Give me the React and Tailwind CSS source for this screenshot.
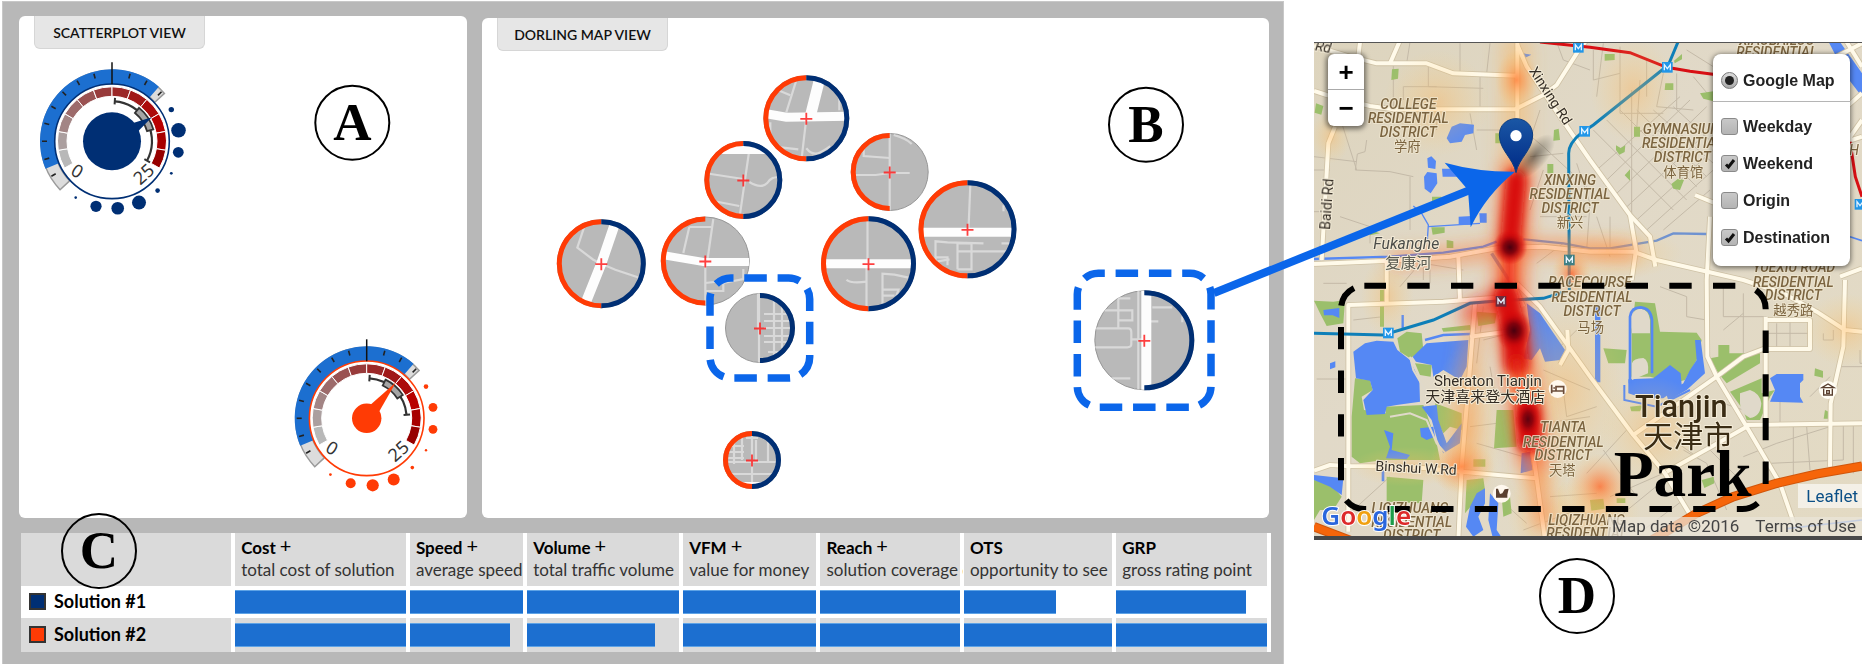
import React from "react";

const polar = (r, deg) => {
  const a = (deg * Math.PI) / 180;
  return [r * Math.sin(a), -r * Math.cos(a)];
};

const sector = (r0, r1, a0, a1) => {
  const large = a1 - a0 > 180 ? 1 : 0;
  const [x0, y0] = polar(r1, a0);
  const [x1, y1] = polar(r1, a1);
  const [x2, y2] = polar(r0, a1);
  const [x3, y3] = polar(r0, a0);
  return `M${x0} ${y0}A${r1} ${r1} 0 ${large} 1 ${x1} ${y1}L${x2} ${y2}A${r0} ${r0} 0 ${large} 0 ${x3} ${y3}Z`;
};

const arc = (r, a0, a1) => {
  const [x0, y0] = polar(r, a0);
  const [x1, y1] = polar(r, a1);
  return `M${x0} ${y0}A${r} ${r} 0 ${a1 - a0 > 180 ? 1 : 0} 1 ${x1} ${y1}`;
};

const radial = (r0, r1, a) => {
  const [x0, y0] = polar(r0, a);
  const [x1, y1] = polar(r1, a);
  return `M${x0} ${y0}L${x1} ${y1}`;
};

const SCALE = ["#b8b8b8", "#ab9f9f", "#a38585", "#9d6b6b", "#9a5252", "#983b3b", "#9b2828", "#a01818", "#ac0b0b", "#b80000", "#a80000", "#960000"];
const TICKS = [-120, -105, -90, -75, -60, -45, -30, -15, 15, 30, 45];

function Dial({ x, y, color, hub, needle, needleBase, whisker, box, dots }) {
  const [tx, ty] = polar(46.5, needle);
  const [lx, ly] = polar(hub - 1, needle - needleBase);
  const [rx, ry] = polar(hub - 1, needle + needleBase);
  return (
    <g transform={`translate(${x} ${y})`}>
      <path d={sector(58, 71, -133, 47.6)} fill="#dcdcdc" stroke="#9a9a9a" strokeWidth="1.5" />
      <path d={sector(57, 72, -112.5, 40.6)} fill="#1c6fd0" />
      {TICKS.map((t) => (
        <path key={t} d={radial(65, 70, t)} stroke="#222" strokeWidth="1.6" />
      ))}
      <circle r="57.3" fill="#fff" stroke={color} strokeWidth="1.6" />
      <path d="M0 -79V-57" stroke="#111" strokeWidth="1.5" />
      {SCALE.map((c, i) => (
        <path key={c} d={sector(45, 54.5, -119.4 + i * 19.9, -119.4 + (i + 1) * 19.9)} fill={c} stroke="#fff" strokeWidth="1" />
      ))}
      <path d={arc(40, whisker[0], whisker[1])} fill="none" stroke="#333" strokeWidth="2.2" />
      <path d={radial(37, 43.5, whisker[0])} stroke="#333" strokeWidth="2" />
      <path d={radial(37, 43.5, whisker[1])} stroke="#333" strokeWidth="2" />
      <path d={sector(36.5, 43, box[0], box[1])} fill="#a5a5a5" stroke="#333" strokeWidth="1.8" />
      <path d={`M${tx} ${ty}L${lx} ${ly}L${rx} ${ry}Z`} fill={color} />
      <circle r={hub} fill={color} />
      <text transform="translate(-35 30) rotate(32)" textAnchor="middle" y="6" fontSize="18" fill="#333" fontFamily="'Noto Sans', sans-serif">0</text>
      <text transform="translate(32 33) rotate(-42)" textAnchor="middle" y="6" fontSize="18" fill="#333" fontFamily="'Noto Sans', sans-serif">25</text>
      {dots.map(([dx, dy, r]) => (
        <circle key={`${dx},${dy}`} cx={dx} cy={dy} r={r} fill={color} />
      ))}
    </g>
  );
}

function Badge({ x, y, children }) {
  return (
    <g>
      <circle cx={x} cy={y} r="37" fill="none" stroke="#000" strokeWidth="2" />
      <text x={x} y={y + 17} textAnchor="middle" fontSize="53" fontWeight="700" fontFamily="'Liberation Serif', serif">{children}</text>
    </g>
  );
}

/* Street snippets are drawn round (0,0), the site's own position. */
const SITES = [
  {
    x: 806.3, y: 117.3, r: 43, left: true, right: true,
    wide: [["M-43 -5L-20 -1L43 -2", 9], ["M4 -2L14 -42", 11]],
    thin: ["M0 0L-5 43", "M-10 -38L-20 -6", "M-28 -28L-16 -23", "M-43 27L-8 31", "M0 30C8 40 14 34 24 28", "M33 -20V-8", "M-36 4V14"],
  },
  {
    x: 743.3, y: 179, r: 39, left: true, right: true,
    wide: [["M-26 -31H26", 10]],
    thin: ["M6 -30L-4 39", "M-39 -7L0 -1", "M6 2C14 7 20 7 24 3C27 -2 30 -3 39 -3", "M-30 21L-4 26"],
  },
  {
    x: 889.7, y: 171, r: 39, left: true, right: false,
    wide: [],
    thin: ["M0 -39V39", "M-39 3H-14L0 1H20", "M-26 -30V-16L0 -14", "M4 -37Q16 -34 22 -28"],
  },
  {
    x: 967.5, y: 228.3, r: 49, left: true, right: true,
    wide: [["M-49 3H49", 9]],
    thin: ["M3 -49L1 0", "M-32 40V12L-20 13L16 14", "M-10 40V14H4V40H-10", "M-10 22H40", "M34 14H46", "M-30 32L-18 30", "M36 -24V-18", "M-32 28H-20V36"],
  },
  {
    x: 868.5, y: 262.7, r: 47.5, left: true, right: true,
    wide: [["M-47 0H47", 9]],
    thin: ["M-1 -47V0", "M-2 0V47", "M-22 16Q-18 20 -2 18", "M14 44V10L26 11L40 14", "M14 26H30L26 38", "M14 32H26"],
  },
  {
    x: 601.3, y: 262.7, r: 44.5, left: true, right: true,
    wide: [["M13 -38L0 0L-16 40", 10]],
    thin: ["M-16 -40L-24 -16L-8 -4L0 0L14 6L38 14"],
  },
  {
    x: 705.3, y: 260, r: 44.5, left: true, right: false,
    wide: [["M-43 -6L-2 1H44", 8]],
    thin: ["M0 0V44", "M8 -42L2 0", "M-16 -34L-22 -8", "M-16 -34H6", "M0 22L18 20V30H0", "M38 8V18L18 22"],
  },
  {
    x: 760, y: 327, r: 35, left: false, right: true,
    wide: [],
    thin: ["M-1 -35V35", "M-2 -35V0", "M14 -30V30", "M22 -25V20", "M4 -14H28", "M4 -7H30", "M4 8H32", "M4 14H30", "M4 0H30", "M8 24H22"],
  },
  {
    x: 752, y: 459, r: 29, left: true, right: true,
    wide: [["M-16 24H14", 4]],
    thin: ["M0 -29V29", "M-29 2H26", "M-26 14H24", "M-10 -24V0", "M-18 -18V4", "M-24 -8H-8", "M-24 -14H-8", "M-24 -2H-8", "M16 -20V2", "M-6 -22H6", "M4 -20V0"],
  },
  {
    x: 1144.3, y: 339.3, r: 50, left: false, right: true,
    wide: [["M2 -50V50", 10]],
    thin: ["M-6 -50V50", "M-50 -12H-16Q-13 -12 -13 -8V4Q-13 7 -17 7H-50", "M-13 -1H0", "M-26 -46V-12", "M-40 -30H-12V-20H-26", "M-26 -42H-14", "M-44 38H-14", "M8 -33H28", "M4 -19H14", "M38 -24V-18"],
  },
];

function Site({ site, id }) {
  const { x, y, r, left, right, wide, thin } = site;
  const ring = r - 2.5;
  return (
    <g transform={`translate(${x} ${y})`}>
      <clipPath id={id}><circle r={r - 0.5} /></clipPath>
      <circle r={r - 0.5} fill="#b9b9b9" stroke="#979797" strokeWidth="1" />
      <g clipPath={`url(#${id})`} fill="none">
        {thin.map((d, i) => <path key={i} d={d} stroke="#d9d9d9" strokeWidth="2.2" />)}
        {wide.map(([d, w], i) => <path key={i} d={d} stroke="#fdfdfd" strokeWidth={w} />)}
      </g>
      {left && <path d={`M0 ${ring}A${ring} ${ring} 0 0 1 0 ${-ring}`} fill="none" stroke="#ff3b05" strokeWidth="5" />}
      {right && <path d={`M0 ${-ring}A${ring} ${ring} 0 0 1 0 ${ring}`} fill="none" stroke="#002f74" strokeWidth="5" />}
      <path d="M-6 0.500H6M0 -5.500V6.500" stroke="#ff2020" strokeWidth="1.8" opacity="0.85" />
    </g>
  );
}

function Panel({ title, children }) {
  return (
    <section className="self-end overflow-hidden rounded-md bg-white">
      <h2 className="ml-[15px] flex h-[33px] w-[171px] items-center justify-center whitespace-nowrap rounded-b-md border-x border-b border-[#d6d6d6] bg-[#e6e6e6] font-[Lato,sans-serif] text-[14px] font-semibold text-[#111]">{title}</h2>
      {children}
    </section>
  );
}

const COLUMNS = [
  ["Cost", "total cost of solution", true, 100, 100],
  ["Speed", "average speed p", true, 100, 88],
  ["Volume", "total traffic volume", true, 100, 84],
  ["VFM", "value for money", true, 100, 100],
  ["Reach", "solution coverage c", true, 100, 100],
  ["OTS", "opportunity to see", false, 62, 100],
  ["GRP", "gross rating point", false, 86, 100],
];

function SolutionTable() {
  return (
    <div className="mt-[15px] -mr-0.5 pl-0.5">
      <table className="w-full table-fixed border-collapse font-[Lato,sans-serif] text-[#1a1a1a]">
        <colgroup>
          <col className="w-[17%]" />
          <col className="w-[14%]" />
          <col className="w-[9.4%]" />
          <col className="w-[12.5%]" />
          <col className="w-[11%]" />
          <col className="w-[11.5%]" />
          <col className="w-[12.2%]" />
          <col className="w-[12.4%]" />
        </colgroup>
        <thead>
          <tr className="h-[53px] bg-[#dadada]">
            <td />
            {COLUMNS.map(([name, note, plus]) => (
              <th key={name} scope="col" className="whitespace-nowrap border-l-4 border-white py-0 pr-0 pl-1.5 text-left align-top font-normal last:border-r-4">
                <div className="mt-1 flex h-[22px] gap-1 text-[17px] leading-[22px] font-bold text-black">
                  {name}
                  {plus && <span className="text-[20px] leading-4 font-normal">+</span>}
                </div>
                <div className="-mr-[3px] overflow-x-clip text-[17px] leading-[22px] text-[#333]">{note}</div>
              </th>
            ))}
          </tr>
        </thead>
        <tbody>
          {[0, 1].map((row) => (
            <tr key={row} className={row ? "h-[34px] bg-[#dadada]" : "h-8 bg-white"}>
              <th scope="row" className="px-0 pt-0 pb-0.5 text-left">
                <span className="flex items-center gap-2 pl-2 text-[18px] leading-6 font-bold text-black">
                  <span className={row ? "size-[17px] border-2 border-[#333] bg-[#ff3b05]" : "size-[17px] border-2 border-[#333] bg-[#002f74]"} />
                  Solution #{row + 1}
                </span>
              </th>
              {COLUMNS.map((c) => (
                <td key={c[0]} className="border-l-4 border-white p-0 last:border-r-4">
                  <div className="h-6 border-y border-[#5ea3e6] bg-[#1c6fd0]" style={{ width: `${c[3 + row]}%` }} />
                </td>
              ))}
            </tr>
          ))}
        </tbody>
      </table>
    </div>
  );
}

const STREETS = [
  "M12 380L140 395M170 330L165 365L142 372L136 420L240 425L310 440M250 100V230M280 170V210M280 170H380M355 110V170L520 175M450 40V130M480 250L500 360M500 300H600M12 420H60",
  "M12 545H40M90 560L180 590L180 640M300 440V600M380 250V300M510 140V230M540 40L530 130M300 36L290 100M70 200L140 420",
  "M660 540L700 420M640 300L700 350L830 470M660 380L760 370M690 560L830 560M690 240L660 330M800 400L840 520L830 660M860 560L900 680M900 560V660M680 700L760 640",
  "M740 36L760 90L840 120M850 60V150M850 150L930 130M880 40L860 200M930 50V250M930 250H1060M965 180V560M990 150L980 300M1010 90V200M1060 130L1040 230L1150 240M1100 130V240M1130 60L1210 110M1150 140L1200 200",
  "M850 300L1090 540M890 270L1130 510M930 240L1160 470M980 240L1190 440M1030 240L1210 400M1090 230L1210 340M860 420L1110 200M880 460L1140 210M910 500L1190 230M940 540L1210 290M980 570L1210 360M1010 600L1210 420M1060 600L1200 480",
  "M40 760H110M20 1047H110M130 1440L240 1340M230 700V760M270 770L330 700M340 750V700L460 720M360 690V760M130 870L220 860M520 830L500 1000M520 930L600 910M540 1010L560 1120M480 1190L560 1180M470 1080L600 1090M500 1240L640 1280M700 1020L840 1080M740 960L800 900M760 1080L770 1160L860 1130",
  "M640 1500L800 1440M560 1400L650 1480M720 1400L860 1390M830 1330L950 1200M880 1260L980 1400M900 1400L1060 1330M940 1450L1050 1360M1000 1500L1120 1410M700 1180L840 1160",
  "M1050 770L1130 800V860L1190 870M1240 760V860H1370M1300 790V970M1400 880V950M1440 870V950M1370 910H1500M1240 900L1300 850M1120 1260L1190 1300L1250 1440M1200 1260L1280 1340M1300 1280L1400 1240L1560 1190M1450 1190V1340M1490 1190L1500 1320M1380 1300L1600 1290M1600 1180V1290M1630 1180V1330M1500 1100L1560 1040M1540 910V930H1570V900M1580 1010H1656M1650 960V1000H1656M1410 1040V1180M1240 1120L1300 1140M1090 1230L1160 1280",
];

const ROADS = [
  "M12 48L120 80L200 100L350 100L430 130L620 137",
  "M150 36L145 80M268 36L240 100",
  "M12 183L50 195L180 228L250 238H615L700 195L740 165L800 70L830 30",
  "M622 36V280L612 430L608 640L605 750L640 830",
  "M622 45L650 110L740 245L840 390L960 555L1020 620L1036 710",
  "M960 555L978 660L965 750",
  "M35 690L55 340L75 290",
  "M12 702L240 692L420 680L560 655L700 650L840 665L970 665L1040 690L1300 750L1420 790L1520 845L1605 900L1656 905",
  "M115 1505V825L400 815L600 800",
  "M230 690V820M445 680L450 815M250 238",
  "M495 820L480 1010L455 1310L445 1530M480 920L590 905",
  "M12 1322L60 1305L110 1308L300 1310L455 1325L680 1345L705 1530M680 1345L665 1240L625 1000",
  "M620 760L690 830L840 1040L970 1215L1065 1330L1150 1470",
  "M750 1005L775 960L772 900",
  "M1200 560L1190 750L1192 980L1220 1040L1310 1190L1410 1360L1455 1490",
  "M970 1215L1220 1040L1300 980L1360 957H1500V870H1370",
  "M1367 860V1180M1310 1185L1656 1180M1070 1325L1240 1230L1310 1190",
  "M1560 1310L1562 1120L1600 950L1605 750M1590 740L1656 715",
  "M1155 495L1240 530M1656 190L1610 230M1656 320L1610 335L1656 270M1560 90L1656 40M1610 36L1656 110",
];

const GREENS = [
  "M246 118l20 -2l-2 30l-20 4zM18 220l22 8l-6 26l-20 -6zM556 310h20v30h-20zM732 300l14 -4l4 34l-20 2zM712 402h18v28h-18zM366 500h28v14h-28zM364 592h40v16l-36 6zM410 630l20 4v20h-20zM180 600l30 10l-30 6z",
  "M884 72l30 0l0 18l-30 2zM1066 160h24v20h-26zM1092 92l24 -20v16l-22 12zM1170 190l40 -6v30l-30 -8zM972 290h18v30h-18zM918 346l14 8l14 -8l-2 20l-16 8l-10 -14zM944 436l16 -18v34zM1084 462l20 -16l18 4l-12 30l-20 -4z",
  "M12 812L70 815L105 810L100 880L50 888L30 850ZM262 925L290 905L335 910L340 960L300 985L270 965ZM500 845L560 850L555 880L505 888ZM395 895L480 885L485 900L400 905ZM210 780H222V890H210ZM235 710l-10 40h10z",
  "M135 1045L180 1050L188 1080L155 1100L162 1140L228 1150L225 1130L340 1125L350 1150L380 1240L390 1290L280 1290L220 1290L150 1300L125 1280V1160Z",
  "M315 1000L365 1005L362 1040L330 1035ZM375 1120L430 1140L455 1150V1200L420 1190L400 1210L385 1180ZM560 1140H610L620 1250L552 1255ZM490 1288h36v22h-36zM230 1340L340 1350L335 1420L230 1415ZM12 1350L60 1360L95 1400L70 1440L30 1440L12 1470ZM470 1350L520 1345L525 1380L490 1420L465 1450ZM575 1400L600 1400L605 1450L580 1460Z",
  "M975 815L1035 820L1050 905L1160 908L1175 930L1160 990L1125 1050L1090 1060L1020 1040L965 1040V900ZM880 955L950 960L945 1000L895 1000ZM1200 985L1225 980V945L1258 945V970L1350 970L1350 1000L1250 1060L1225 1030ZM1260 1085L1355 1045V1090L1395 1080L1380 1100L1350 1170L1310 1170L1300 1140ZM1515 1015l24 8v20l-26 -6zM1175 1350l36 -10l2 20l-30 14zM1545 1140l12 6v20l-16 0zM840 1410l40 -4l4 30l-40 6zM920 1405h26v14h-26zM960 1130l40 -4l-10 18h-26z",
];

const WATERS = [
  "M410 325L425 290L450 280L492 284L490 310L465 315L455 335L420 340ZM352 385l12 -6l14 14l-2 24l-22 -4zM342 440l10 -14l28 4l2 30l-20 30l-18 -14zM396 416h50v24h-48zM446 560l40 -2v26h-40zM508 550h22v28h-20z",
  "M130 965L165 940L200 932L250 935L262 960L300 990L328 1050L330 1115L260 1125L230 1130L225 1152L170 1155L160 1110L188 1080L180 1052L138 1045Z",
  "M308 980L350 940L475 930L470 1010L450 1050L400 1020L370 1040L365 1005L318 995Z",
  "M222 1200L250 1210L245 1260L300 1275L290 1288L228 1285L240 1250ZM335 1130L380 1125L385 1170L410 1240L455 1180L450 1240L400 1270L382 1230L365 1170Z",
  "M330 1195L370 1190L375 1220L350 1230L333 1220ZM12 1335L100 1345L95 1395L60 1370L12 1350ZM40 840l48 -6v30l-20 -8l-26 0zM60 1000l16 -6v18l-16 6z",
  "M650 820L690 850L765 960L750 990L705 995L690 955L665 990L640 985L660 900ZM635 1270L660 1265L668 1320L632 1330ZM500 1390L525 1375V1420L505 1460L520 1500L490 1520L468 1490L480 1430ZM540 1390L565 1420L560 1500L580 1530H550L535 1470Z",
  "M855 825h16v232h-16zM955 1048L1030 1045L1080 1005L1112 1030L1115 1065L1060 1105L1000 1105L955 1090ZM1155 930L1172 930L1185 1030L1130 1080L1075 1112L1070 1095L1120 1060L1140 1020L1160 990ZM1380 1045L1400 1032H1480V1050L1470 1060V1100L1480 1118L1380 1115L1395 1080Z",
  "M1556 36L1590 36L1656 130V200L1610 140ZM215 1310h8v44h-8zM640 70l24 4l-20 10z",
];

const LABELS = [
  [295, 236, "COLLEGE"], [295, 278, "RESIDENTIAL"], [295, 320, "DISTRICT"],
  [780, 465, "XINXING"], [780, 506, "RESIDENTIAL"], [780, 548, "DISTRICT"],
  [1117, 312, "GYMNASIUM"], [1117, 354, "RESIDENTIAL"], [1117, 395, "DISTRICT"],
  [840, 772, "RACECOURSE"], [846, 817, "RESIDENTIAL"], [846, 858, "DISTRICT"],
  [760, 1206, "TIANTA"], [760, 1250, "RESIDENTIAL"], [760, 1290, "DISTRICT"],
  [300, 1448, "LIQIZHUANG"], [305, 1490, "RESIDENTIAL"], [305, 1530, "DISTRICT"],
  [830, 1484, "LIQIZHUANG"], [830, 1524, "RESIDENTIAL"],
  [1400, 46, "XIAOBAILOU"], [1400, 82, "RESIDENTIAL"],
  [1452, 726, "YUEXIU ROAD"], [1450, 770, "RESIDENTIAL"], [1450, 810, "DISTRICT"],
];

const CJK_LABELS = [
  [292, 364, "学府"], [780, 592, "新兴"], [1120, 440, "体育馆"], [842, 905, "马场"],
  [757, 1336, "天塔"], [1450, 855, "越秀路"],
];

const METROS = [[805, 52, "#2196e8"], [1072, 112, "#2196e8"], [824, 304, "#2196e8"], [778, 690, "#3f7f84"], [235, 909, "#2196e8"], [573, 814, "#6e2a3a"], [1650, 523, "#2196e8"]];

/* cx, cy, rx, ry, gradient */
const GLOW = [
  [620, 150, 64, 90, "warm"], [62, 320, 60, 80, "faint"], [232, 800, 80, 120, "faint"], [785, 730, 60, 70, "warm"],
  [455, 1310, 100, 80, "warm"], [290, 1310, 170, 60, "faint"], [870, 1370, 100, 100, "warm"], [760, 1080, 190, 260, "faint"],
  [970, 180, 130, 160, "faint"], [1610, 900, 130, 110, "faint"], [1030, 1200, 160, 160, "faint"], [700, 1450, 110, 140, "faint"],
  [900, 670, 220, 80, "faint"], [470, 1200, 110, 260, "faint"], [850, 1450, 140, 120, "faint"], [380, 220, 160, 160, "faint"],
];

function CityMap() {
  return (
    <svg viewBox="12 36 1644 1494" className="block w-full" role="img" aria-label="Traffic heat map">
      <defs>
        <linearGradient id="land" x1="0" y1="0" x2="1" y2="1">
          <stop offset="0" stopColor="#ddd4bd" /><stop offset="0.4" stopColor="#e1d9c8" /><stop offset="1" stopColor="#e3dac3" />
        </linearGradient>
        <radialGradient id="faint"><stop offset="0" stopColor="#ffb050" stopOpacity="0.38" /><stop offset="1" stopColor="#ffd070" stopOpacity="0" /></radialGradient>
        <radialGradient id="warm"><stop offset="0" stopColor="#ff5a20" stopOpacity="0.75" /><stop offset="0.5" stopColor="#ff8a40" stopOpacity="0.35" /><stop offset="1" stopColor="#ffc060" stopOpacity="0" /></radialGradient>
        <radialGradient id="dark"><stop offset="0" stopColor="#48000f" /><stop offset="0.35" stopColor="#78000c" stopOpacity="0.9" /><stop offset="0.7" stopColor="#c0040a" stopOpacity="0.5" /><stop offset="1" stopColor="#e00808" stopOpacity="0" /></radialGradient>
        <linearGradient id="pin" x1="0" y1="0" x2="0" y2="1"><stop offset="0" stopColor="#1a57a5" /><stop offset="1" stopColor="#002a86" /></linearGradient>
        <radialGradient id="shade"><stop offset="0" stopColor="#000" stopOpacity="0.45" /><stop offset="1" stopColor="#000" stopOpacity="0" /></radialGradient>
        <filter id="haze" filterUnits="userSpaceOnUse" x="0" y="0" width="1700" height="1600"><feGaussianBlur stdDeviation="26" /></filter>
        <filter id="core" filterUnits="userSpaceOnUse" x="400" y="300" width="500" height="1200"><feGaussianBlur stdDeviation="14" /></filter>
      </defs>
      <rect x="12" y="36" width="1644" height="1494" fill="url(#land)" />
      <g fill="none" stroke="#c4baa8" strokeWidth="3">{STREETS.map((d) => <path key={d} d={d} />)}</g>
      <g fill="#9bbf6b">{GREENS.map((d) => <path key={d} d={d} />)}</g>
      <g fill="#5588f4">{WATERS.map((d) => <path key={d} d={d} />)}</g>
      <path d="M300 980L310 1020L345 1080L360 1110M240 1160L300 1150L350 1170L380 1240L405 1268" fill="none" stroke="#e0d9ca" strokeWidth="6" />
      <path d="M966 1040V860Q970 836 992 836Q1016 838 1020 870V910H966M966 1000Q970 985 1000 984Q1018 990 1014 1030L966 1050ZM1290 1090L1320 1080Q1350 1090 1354 1120Q1352 1160 1320 1164Q1290 1150 1290 1120Z" fill="#e0d9ca" />
      <g fill="none" stroke="#5588f4" strokeWidth="7">
        <path d="M12 687L240 680L400 668L520 650L560 635" /><path d="M640 628L760 640L840 655L900 655L1040 632L1090 610L1190 612" stroke="#6f92d0" />
        <path d="M310 528L335 550L355 585L352 630M355 590L510 580" strokeWidth="4" /><path d="M545 670L600 755" stroke="#7d8fb8" strokeWidth="10" />
        <path d="M345 930L400 915L480 912M278 855V900" /><path d="M960 1060V860Q964 832 992 832Q1022 834 1026 870V1030" strokeWidth="8" />
        <path d="M943 1065V1110L1040 1130L1140 1080" strokeWidth="6" /><path d="M1620 620L1656 632M1430 1496L1656 1470" strokeWidth="5" />
      </g>
      <g fill="none" stroke="#cfc2a6" strokeWidth="17" strokeLinejoin="round">{ROADS.map((d) => <path key={d} d={d} />)}</g>
      <g fill="none" stroke="#fffaea" strokeWidth="12" strokeLinejoin="round">{ROADS.map((d) => <path key={d} d={d} />)}</g>
      <path d="M1010 1540L1160 1450L1270 1400L1400 1360L1520 1332L1656 1308M12 1490L130 1535" fill="none" stroke="#d0560c" strokeWidth="28" />
      <path d="M1010 1540L1160 1450L1270 1400L1400 1360L1520 1332L1656 1308M12 1490L130 1535" fill="none" stroke="#f6650a" strokeWidth="22" />
      <g fill="none" strokeWidth="9">
        <path d="M690 36L840 52L960 68L1070 112L1140 124L1220 134M1620 335L1636 440L1656 500" stroke="#d80f14" />
        <path d="M1104 36L1075 105L850 285L815 308Q776 340 776 370L778 780" stroke="#0e7fb8" />
        <path d="M12 910L220 915L370 870L480 820L570 812L700 805L765 785" stroke="#0e7fb8" />
      </g>
      {GLOW.map(([cx, cy, rx, ry, g], i) => <ellipse key={i} cx={cx} cy={cy} rx={rx} ry={ry} fill={`url(#${g})`} />)}
      <g fill="none" strokeLinecap="round" strokeLinejoin="round">
        <g filter="url(#haze)">
          <path d="M618 60L616 440L605 700L600 800L625 1000L655 1180L680 1340" stroke="#ffb050" strokeWidth="90" opacity="0.4" />
          <path d="M500 860L480 1010L460 1310" stroke="#ff9040" strokeWidth="60" opacity="0.4" />
          <path d="M260 690L420 678L600 655L720 652L960 665" stroke="#ff7430" strokeWidth="46" opacity="0.55" />
          <path d="M618 430L604 650L596 790L614 910L628 1010L655 1180L672 1280" stroke="#ff5020" strokeWidth="96" opacity="0.6" />
          <path d="M490 850L600 800" stroke="#f03018" strokeWidth="70" opacity="0.7" />
          <path d="M680 1340L700 1480" stroke="#ff7430" strokeWidth="40" opacity="0.6" />
        </g>
        <g filter="url(#core)">
          <path d="M618 450L608 560L600 650" stroke="#d80808" strokeWidth="62" />
          <path d="M600 650L596 790" stroke="#e82010" strokeWidth="36" opacity="0.75" />
          <path d="M588 800L612 900L620 1000" stroke="#d80808" strokeWidth="74" />
          <path d="M620 1000L650 1150" stroke="#f04020" strokeWidth="34" opacity="0.6" />
          <path d="M654 1140L658 1230" stroke="#d80808" strokeWidth="76" />
        </g>
      </g>
      <circle cx="600" cy="652" r="52" fill="url(#dark)" />
      <ellipse cx="612" cy="902" rx="54" ry="62" fill="url(#dark)" />
      <ellipse cx="654" cy="1168" rx="40" ry="60" fill="url(#dark)" opacity="0.85" />
      {METROS.map(([x, y, c]) => (
        <g key={`${x}-${y}`}>
          <rect x={x - 16} y={y - 16} width="32" height="32" fill={c} />
          <path d={`M${x - 9} ${y + 9}V${y - 8}L${x} ${y + 4}L${x + 9} ${y - 8}V${y + 9}`} fill="none" stroke="#e4f3ff" strokeWidth="4" />
        </g>
      ))}
      <g fill="#7b6440" stroke="#efe6d0" strokeOpacity="0.8" strokeWidth="6" paintOrder="stroke" textAnchor="middle" strokeLinejoin="round">
        <g fontSize="41" fontStyle="italic" fontWeight="500" fontFamily="Roboto, sans-serif">
          {LABELS.map(([x, y, t]) => <text key={`${x}${y}`} x={x} y={y}>{t}</text>)}
        </g>
        <g fontSize="40" fontFamily="'Noto Sans CJK SC', sans-serif">
          {CJK_LABELS.map(([x, y, t]) => <text key={t} x={x} y={y}>{t}</text>)}
        </g>
      </g>
      <g fill="#332c24" stroke="#f4ecd8" strokeWidth="6" paintOrder="stroke" strokeLinejoin="round" fontFamily="Roboto, 'Noto Sans CJK SC', sans-serif">
        <text x="14" y="60" fontSize="42" fontStyle="italic" transform="rotate(10 14 60)">Rd</text>
        <text transform="translate(60 600) rotate(-86)" fontSize="42">Baidi Rd</text>
        <text transform="translate(656 122) rotate(57)" fontSize="42">Xinxing Rd</text>
        <text x="190" y="658" fontSize="47" fontStyle="italic" fill="#4b4b48">Fukanghe</text>
        <text x="226" y="714" fontSize="46" fill="#5a5a50">复康河</text>
        <text x="372" y="1068" fontSize="45">Sheraton Tianjin</text>
        <text x="346" y="1115" fontSize="45">天津喜来登大酒店</text>
        <text transform="translate(196 1322) rotate(3)" fontSize="42">Binshui W.Rd</text>
        <text x="975" y="1162" fontSize="92" fontWeight="500" fill="#3a2c14">Tianjin</text>
        <text x="1000" y="1250" fontSize="90" fill="#3a2c14">天津市</text>
        <text x="1618" y="374" fontSize="42" fontStyle="italic" fill="#7b6440">H</text>
      </g>
      <g>
        <circle cx="743" cy="1077" r="27" fill="#fff8ee" /><path d="M725 1064V1090M725 1083H761V1092M761 1083V1070H738V1083M730 1074h5" fill="none" stroke="#6b4c3a" strokeWidth="5" />
        <circle cx="575" cy="1391" r="27" fill="#fff8ee" /><path d="M558 1376V1403H592V1394L596 1376L584 1378L577 1390L570 1392L564 1376Z" fill="#5a4030" />
        <circle cx="1554" cy="1080" r="27" fill="#fffdf5" /><path d="M1536 1073L1554 1062L1572 1073ZM1541 1076V1095H1567V1076M1550 1082H1558V1090H1550Z" fill="none" stroke="#5a4030" strokeWidth="4" />
      </g>
      <ellipse cx="672" cy="380" rx="84" ry="38" transform="rotate(-48 672 380)" fill="url(#shade)" />
      <path d="M618 428C610 385 568 360 568 315C568 286 590 266 618 266C646 266 668 286 668 315C668 360 626 385 618 428Z" fill="url(#pin)" stroke="#0b3c80" strokeWidth="3" />
      <circle cx="618" cy="317" r="17" fill="#fff" />
      <rect x="93" y="767" width="1274" height="670" rx="70" fill="none" stroke="#000" strokeWidth="18" strokeDasharray="67 64" strokeDashoffset="2" />
      <text x="911" y="1398" fontSize="196" fontWeight="700" fontFamily="'Liberation Serif', serif">Park</text>
      <text x="34" y="1485" fontSize="78" fontWeight="600" fontFamily="'Noto Sans', sans-serif" stroke="#fff" strokeWidth="6" paintOrder="stroke">
        <tspan fill="#2a66dd">G</tspan><tspan fill="#dd2a2a">o</tspan><tspan fill="#f0a010">o</tspan><tspan fill="#2a66dd">g</tspan><tspan fill="#1c9c48">l</tspan><tspan fill="#dd2a2a">e</tspan>
      </text>
      <path d="M12 37H1656" stroke="#555" strokeWidth="4" />
      <path d="M12 1524H1656" stroke="#484848" strokeWidth="12" />
    </svg>
  );
}

function Option({ type, label, checked }) {
  const round = type === "radio";
  return (
    <label className="flex items-center gap-[5px] whitespace-nowrap">
      <span className="relative flex size-[17px] items-center justify-center">
        <input
          type={type}
          name={round ? "base" : label}
          defaultChecked={checked}
          className={`peer size-[17px] appearance-none border bg-linear-to-b ${round ? "rounded-full border-[#777] from-[#ddd] to-[#aaa]" : "rounded-[3px] border-[#8a8a8a] from-[#c8c8c8] to-[#b4b4b4]"}`}
        />
        {round ? (
          <span className="pointer-events-none absolute hidden size-[9px] rounded-full bg-[#222] peer-checked:block" />
        ) : (
          <svg viewBox="0 0 12 12" className="pointer-events-none absolute hidden size-3 peer-checked:block">
            <path d="M2 6.500L4.500 9L10 2" fill="none" stroke="#111" strokeWidth="3" />
          </svg>
        )}
      </span>
      {label}
    </label>
  );
}

export default function App() {
  return (
    <main className="relative grid grid-cols-[1282fr_548fr] items-start gap-x-[30px] bg-white pt-px pr-2 pl-0.5">
      <div className="border border-[#c8c8c8] bg-[#b8b8b8] pt-[14px] pr-[14px] pb-3 pl-4">
        <div className="grid grid-cols-[448fr_787fr] gap-x-[15px]">
          <Panel title="SCATTERPLOT VIEW">
            <svg viewBox="19 49 448 469" className="block w-full" role="img" aria-label="Scatterplot of two solutions">
              <Dial
                x={112} y={141.3} color="#002f74" hub={29} needle={59} needleBase={10} whisker={[4, 119]} box={[39, 74]}
                dots={[[59.3, -31.7, 2.7], [66.5, -11, 7.3], [66.3, 11, 5.4], [59.3, 32, 1.4], [45.6, 49.3, 2.3], [27, 61.3, 7], [5.7, 67, 6.3], [-16, 65, 5.6], [-36.3, 56.3, 1.3]]}
              />
              <Dial
                x={366.7} y={418.3} color="#ff3b05" hub={14.7} needle={39} needleBase={24} whisker={[4, 85]} box={[26, 57]}
                dots={[[59.3, -31.7, 2.3], [66.3, -11, 4.4], [66.3, 11, 4.4], [59.3, 32, 1.2], [45.6, 49.3, 1.8], [27, 61.3, 6], [6, 67, 6.1], [-16, 65, 5], [-36.3, 56.3, 1.4]]}
              />
              <Badge x={352.3} y={122.7}>A</Badge>
            </svg>
          </Panel>
          <Panel title="DORLING MAP VIEW">
            <svg viewBox="482 50 787 467" className="block w-full" role="img" aria-label="Dorling map of sites">
              {SITES.map((s, i) => <Site key={i} site={s} id={`site-${i}`} />)}
              <g fill="none" stroke="#0b66ea" strokeWidth="7.5" strokeDasharray="22.5 10.8">
                <rect x="710" y="277" width="99.7" height="100" rx="21" strokeDashoffset="20" />
                <rect x="1077.3" y="272.3" width="133.7" height="134" rx="21" strokeDashoffset="16" />
              </g>
              <Badge x={1146} y={123.7}>B</Badge>
            </svg>
          </Panel>
        </div>
        <SolutionTable />
      </div>

      <aside className="flex flex-col items-center pt-[41px]">
        <div className="relative w-full overflow-hidden">
          <CityMap />
          <div className="absolute top-3 left-[14px] flex flex-col rounded-md bg-white shadow-[0_1px_5px_2px_rgba(0,0,0,0.5)]">
            <button type="button" aria-label="Zoom in" className="flex size-9 items-center justify-center border-b border-[#aaa] font-['Liberation_Sans',sans-serif] text-[26px] leading-none font-bold text-black">+</button>
            <button type="button" aria-label="Zoom out" className="flex size-9 items-center justify-center font-['Liberation_Sans',sans-serif] text-[26px] leading-none font-bold text-black">−</button>
          </div>
          <form className="absolute top-3 right-3 w-[137px] rounded-lg bg-white font-['Liberation_Sans',sans-serif] text-[16px] leading-[37px] font-bold text-[#222] shadow-[0_1px_5px_1px_rgba(0,0,0,0.5)]">
            <div className="border-b border-[#b5b5b5] px-2 pt-2 pb-0.5">
              <Option type="radio" label="Google Map" checked />
            </div>
            <div className="px-2 pt-1.5 pb-[10px]">
              <Option type="checkbox" label="Weekday" />
              <Option type="checkbox" label="Weekend" checked />
              <Option type="checkbox" label="Origin" />
              <Option type="checkbox" label="Destination" checked />
            </div>
          </form>
          <a href="#leaflet" className="absolute right-0 bottom-8 bg-white/60 pr-1 pl-2 font-[Roboto,sans-serif] text-[17px] leading-6 text-[#0b4f86]">Leaflet</a>
          <div className="absolute right-0 bottom-1 flex gap-4 bg-[#e9e4d8]/75 pr-1.5 pl-1 font-[Roboto,sans-serif] text-[17px] leading-[19px] text-[#444]">
            <span>Map data ©2016</span>
            <a href="#terms">Terms of Use</a>
          </div>
        </div>
        <svg viewBox="0 0 76 76" className="mt-[18px] -ml-[22px] block w-[76px]" role="img" aria-label="D">
          <Badge x={38} y={38}>D</Badge>
        </svg>
      </aside>

      <svg viewBox="0 0 1870 664" className="pointer-events-none absolute inset-x-0 top-0 w-full" aria-hidden="true">
        <path d="M1214 293L1470 190" stroke="#0b66ea" strokeWidth="8" />
        <path d="M1515 171.7Q1478 172 1444.7 162.7L1468 190L1470.7 227.3Q1486 195 1515 171.7Z" fill="#0b66ea" />
        <Badge x={99} y={551}>C</Badge>
      </svg>
    </main>
  );
}
